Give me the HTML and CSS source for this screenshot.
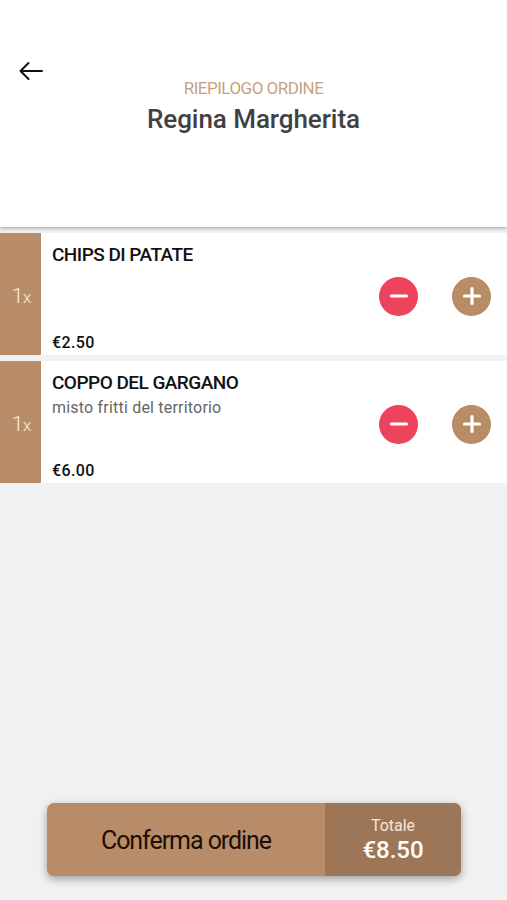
FILE: index.html
```html
<!DOCTYPE html>
<html lang="it">
<head>
  <meta charset="UTF-8">
  <meta name="viewport" content="width=device-width, initial-scale=1.0">
  <title>Riepilogo ordine</title>
  <link rel="stylesheet" href="styles.css">
</head>
<body>

<header class="header">
  <a class="back" href="#" aria-label="Indietro">
    <svg width="24" height="20" viewBox="0 0 24 20">
      <path d="M23 10H2M9.5 2L1.5 10l8 8" />
    </svg>
  </a>
  <div class="heading">
    <div class="subtitle">RIEPILOGO ORDINE</div>
    <h1>Regina Margherita</h1>
  </div>
</header>

<main class="items">
  <div class="item">
    <div class="quantity"><span class="count">1</span><span class="times">x</span></div>
    <div class="info">
      <h2>CHIPS DI PATATE</h2>
      <div class="price">€2.50</div>
    </div>
    <div class="actions">
      <button class="round minus" aria-label="Rimuovi">
        <svg width="20" height="20" viewBox="0 0 20 20"><path d="M2.5 10h15" /></svg>
      </button>
      <button class="round plus" aria-label="Aggiungi">
        <svg width="20" height="20" viewBox="0 0 20 20"><path d="M2.5 10h15M10 2.5v15" /></svg>
      </button>
    </div>
  </div>

  <div class="item">
    <div class="quantity"><span class="count">1</span><span class="times">x</span></div>
    <div class="info">
      <h2>COPPO DEL GARGANO</h2>
      <p>misto fritti del territorio</p>
      <div class="price">€6.00</div>
    </div>
    <div class="actions">
      <button class="round minus" aria-label="Rimuovi">
        <svg width="20" height="20" viewBox="0 0 20 20"><path d="M2.5 10h15" /></svg>
      </button>
      <button class="round plus" aria-label="Aggiungi">
        <svg width="20" height="20" viewBox="0 0 20 20"><path d="M2.5 10h15M10 2.5v15" /></svg>
      </button>
    </div>
  </div>
</main>

<footer class="footer">
  <button class="confirm">
    <span class="confirm-label">Conferma ordine</span>
    <span class="total">
      <span class="total-label">Totale</span>
      <span class="total-price">€8.50</span>
    </span>
  </button>
</footer>

</body>
</html>
```
FILE: styles.css
```css
* {
  box-sizing: border-box;
}

body {
  font-family: Roboto, "Liberation Sans", sans-serif;
  background-color: #f1f1f1;
  margin: 0;
  height: 100vh;
  display: flex;
  flex-direction: column;
}

h1, h2, p {
  margin: 0;
}

button {
  font-family: inherit;
  border: none;
  padding: 0;
  cursor: pointer;
}

svg {
  display: block;
  fill: none;
  stroke-linecap: round;
  stroke-linejoin: round;
}

/* header */
.header {
  display: grid;
  grid-template-columns: 60px 1fr 60px;
  align-items: start;
  height: 227px;
  padding-top: 60px;
  background-color: #fff;
  box-shadow: 0 1px 4px rgba(0, 0, 0, 0.35);
}

.back {
  padding: 1px 0 0 19px;
}

.back svg {
  stroke: #111;
  stroke-width: 2;
}

.heading {
  text-align: center;
  padding-top: 17px;
}

.subtitle {
  color: #c89f82;
  font-size: 17px;
  font-weight: 400;
  line-height: 22px;
  letter-spacing: -0.5px;
}

h1 {
  color: #3f4144;
  font-size: 26px;
  font-weight: 500;
  line-height: 40px;
  letter-spacing: -0.05px;
}

/* order rows */
.items {
  flex: 1;
  display: flex;
  flex-direction: column;
  gap: 6px;
  padding-top: 6px;
}

.item {
  display: flex;
  height: 122px;
  background-color: #fff;
}

.quantity {
  width: 41px;
  padding-left: 2px;
  background-color: #b88c68;
  color: #f8eee5;
  font-weight: 300;
  line-height: 127px;
  text-align: center;
}

.count {
  font-size: 21px;
  letter-spacing: -0.5px;
}

.times {
  font-size: 17px;
}

.info {
  flex: 1;
  display: flex;
  flex-direction: column;
  padding: 10px 0 2px 11px;
}

h2 {
  color: #111;
  font-size: 19px;
  font-weight: 500;
  line-height: 24px;
  letter-spacing: -0.53px;
}

.info p {
  color: #666;
  font-size: 16px;
  line-height: 25px;
  letter-spacing: 0.2px;
}

.price {
  margin-top: auto;
  color: #111;
  font-size: 16px;
  font-weight: 500;
  line-height: 20px;
  letter-spacing: 0.4px;
}

.actions {
  display: flex;
  align-items: center;
  gap: 34px;
  padding: 4px 16px 0 0;
}

.round {
  display: flex;
  align-items: center;
  justify-content: center;
  width: 39px;
  height: 39px;
  border-radius: 50%;
}

.round svg {
  stroke: #fff;
  stroke-width: 3.2;
}

.minus {
  background-color: #ed435d;
}

.plus {
  background-color: #b88c64;
}

/* confirm bar */
.footer {
  padding: 0 46px 24px 47px;
}

.confirm {
  display: flex;
  width: 100%;
  height: 73px;
  border-radius: 7px;
  overflow: hidden;
  background-color: #b88c68;
  box-shadow: 0 3px 8px rgba(0, 0, 0, 0.35);
}

.confirm-label {
  flex: 1;
  color: #1c0f05;
  font-size: 25px;
  line-height: 75px;
  letter-spacing: -1.05px;
}

.total {
  display: flex;
  flex-direction: column;
  width: 136px;
  height: 73px;
  padding-top: 12px;
  background-color: #9c7656;
}

.total-label {
  color: #f6e6da;
  font-size: 16px;
  line-height: 22px;
}

.total-price {
  color: #fff;
  font-size: 24px;
  font-weight: 500;
  line-height: 27px;
}
```
